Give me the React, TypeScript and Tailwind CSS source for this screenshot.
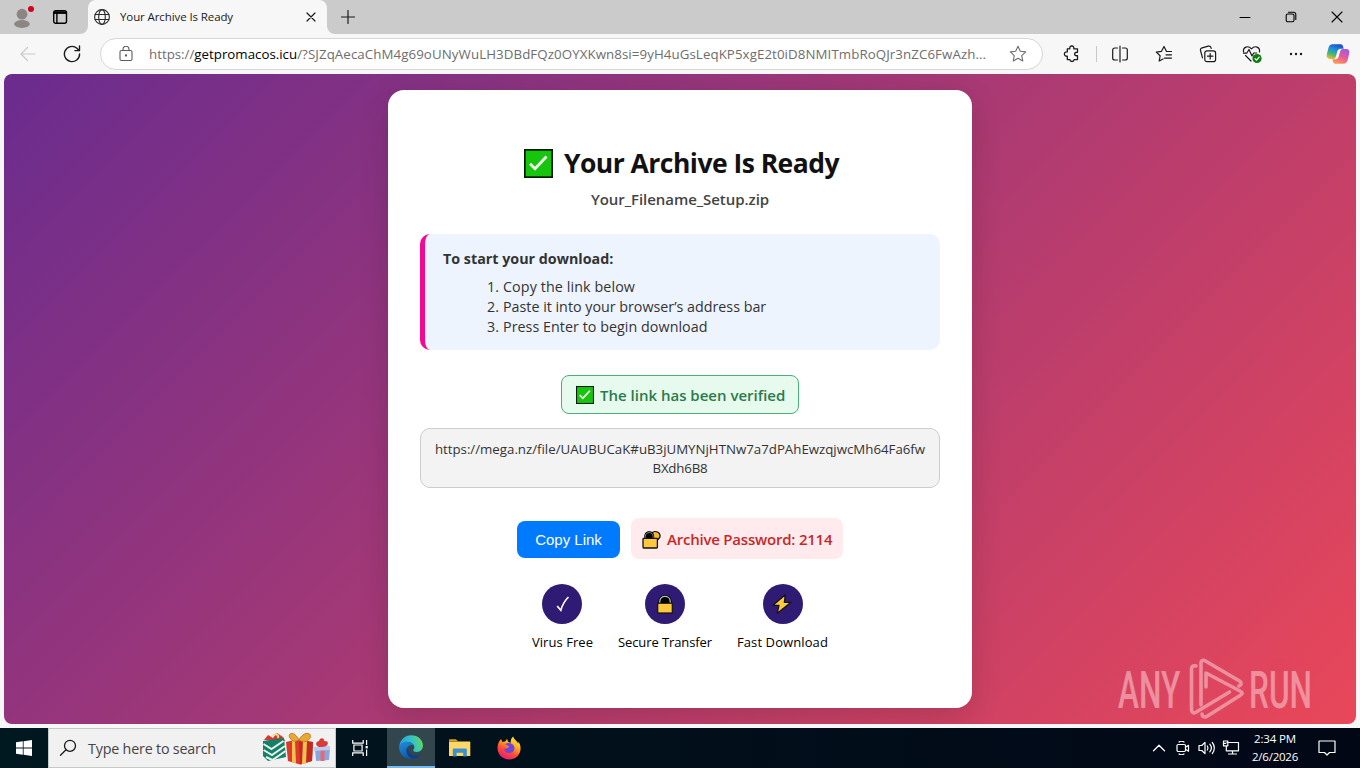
import type { ReactNode } from "react";

const STEPS = [
  { text: "Copy the link below", className: "tracking-[0.1px]" },
  { text: "Paste it into your browser’s address bar", className: "tracking-[-0.01px]" },
  { text: "Press Enter to begin download", className: "tracking-[0.04px]" },
];

function Line({ size = 18, className = "", width = 1.2, children }: { size?: number; className?: string; width?: number; children: ReactNode }) {
  return (
    <svg
      width={size}
      height={size}
      viewBox={`0 0 ${size} ${size}`}
      fill="none"
      stroke="currentColor"
      strokeWidth={width}
      strokeLinecap="round"
      strokeLinejoin="round"
      className={`shrink-0 ${className}`}
    >
      {children}
    </svg>
  );
}

function CheckBox({ size }: { size: number }) {
  return (
    <svg width={size} height={size} viewBox="0 0 29 29" className="shrink-0">
      <rect x="0.8" y="0.8" width="27.4" height="27.4" fill="#16c60c" stroke="#0b1a0b" strokeWidth="1.8" />
      <path d="M6 14.8l5 5L22.5 7.5" fill="none" stroke="#f3f9ef" strokeWidth="2.8" />
    </svg>
  );
}

function TabStrip() {
  return (
    <div className="flex h-[34px] items-start bg-[#cbcbcb]">
      <div className="flex h-[34px] w-[88px] items-center">
        <svg width="24" height="26" viewBox="0 0 24 26" className="ml-3">
          <circle cx="10" cy="10.2" r="5.4" fill="#8b8683" />
          <ellipse cx="10" cy="20" rx="7.8" ry="3.9" fill="#8b8683" />
          <circle cx="19" cy="5" r="4" fill="#cbcbcb" />
          <circle cx="19" cy="5" r="3" fill="#d0021b" />
        </svg>
        <Line size={16} className="ml-4 text-black" width={1.4}>
          <rect x="1.7" y="1.7" width="12.8" height="12.6" rx="2" />
          <path d="M2 3.6h12.4" strokeWidth="2.6" strokeLinecap="butt" />
          <path d="M4.9 4v10" />
        </Line>
      </div>
      <div className="relative flex h-[34px] w-[239px] items-center rounded-t-lg bg-[#f7f7f7]">
        <svg width="8" height="8" className="absolute bottom-0 -left-2">
          <path d="M8 0v8H0A8 8 0 0 0 8 0z" fill="#f7f7f7" />
        </svg>
        <svg width="8" height="8" className="absolute -right-2 bottom-0">
          <path d="M0 0v8h8A8 8 0 0 1 0 0z" fill="#f7f7f7" />
        </svg>
        <Line size={16} className="ml-1.5 text-[#2b2b2b]" width={1.1}>
          <circle cx="8" cy="8" r="7.4" />
          <ellipse cx="8" cy="8" rx="3.3" ry="7.4" />
          <path d="M1.1 5.5h13.8M1.1 10.5h13.8" />
        </Line>
        <span className="ml-2.5 text-[11.5px] tracking-[-0.1px] text-[#1b1b1b]">Your Archive Is Ready</span>
        <Line size={10} className="absolute top-3 left-[218px] text-[#1b1b1b]">
          <path d="M1 1l8 8M9 1L1 9" />
        </Line>
      </div>
      <Line size={14} className="mt-2.5 ml-3.5 text-[#1b1b1b]">
        <path d="M7 .5v13M.5 7h13" />
      </Line>
      <div className="ml-auto flex h-[34px] items-center text-black">
        <div className="flex w-[46px] justify-center">
          <Line size={12} width={1}>
            <path d="M1 6.5h10" />
          </Line>
        </div>
        <div className="flex w-[46px] justify-center">
          <Line size={12} width={1.1}>
            <rect x="1.2" y="3" width="7.8" height="7.8" rx="1.6" />
            <path d="M3.4 1.2H8.6a2.2 2.2 0 0 1 2.2 2.2v5" />
          </Line>
        </div>
        <div className="flex w-[46px] justify-center">
          <Line size={12} width={1.1}>
            <path d="M1 1l10 10M11 1L1 11" />
          </Line>
        </div>
      </div>
    </div>
  );
}

function ToolButton({ children }: { children: ReactNode }) {
  return <div className="flex h-8 w-11 shrink-0 items-center justify-center text-[#1b1b1b]">{children}</div>;
}

function CopilotIcon() {
  return (
    <svg width="24" height="22" viewBox="0 0 24 22">
      <defs>
        <linearGradient id="cpA" x1="0.6" y1="0" x2="0.2" y2="1">
          <stop offset="0" stopColor="#1b4fc4" />
          <stop offset="0.35" stopColor="#1f8fe0" />
          <stop offset="0.65" stopColor="#3fb57d" />
          <stop offset="1" stopColor="#f2c01c" />
        </linearGradient>
        <linearGradient id="cpB" x1="0.8" y1="0" x2="0.3" y2="1">
          <stop offset="0" stopColor="#9a5ce8" />
          <stop offset="0.5" stopColor="#e8589c" />
          <stop offset="1" stopColor="#ff9a50" />
        </linearGradient>
      </defs>
      <path
        d="M6.5 1.2h8.2c1.200 0 2 .8 2.300 2l.7 2.600h-3.200c-1.700 0-2.600.9-3.100 2.500l-1.700 5.600c-.4 1.300-1.200 2-2.600 2H3.600c-2.300 0-3.500-2-2.800-4.700l1.600-6.200C3.100 2.500 4.300 1.200 6.500 1.200z"
        fill="url(#cpA)"
      />
      <path
        d="M17.500 20.800H9.300c-1.200 0-2-.8-2.300-2l-.7-2.600h3.200c1.700 0 2.600-.9 3.100-2.500l1.700-5.600c.4-1.300 1.200-2 2.600-2h3.500c2.300 0 3.500 2 2.800 4.700l-1.600 6.200c-.7 2.500-1.900 3.800-4.100 3.800z"
        fill="url(#cpB)"
      />
    </svg>
  );
}

function Toolbar() {
  return (
    <div className="flex h-10 items-center bg-[#f7f7f7]">
      <Line size={16} className="ml-5 text-[#c9c9c9]">
        <path d="M15 8H1M7.500 1.500L1 8l6.500 6.500" />
      </Line>
      <Line size={18} className="ml-[27px] text-[#1b1b1b]" width={1.4}>
        <path d="M16.600 9a7.600 7.600 0 1 1-2.700-5.800l2.300 2.200" />
        <path d="M16.500 1v4.600h-4.600" />
      </Line>
      <div className="ml-[19px] flex h-8 w-[943px] items-center rounded-full border border-[#d6d6d6] bg-white">
        <Line size={16} className="ml-[17px] text-[#5c5c5c]" width={1.1}>
          <rect x="2" y="4.500" width="12" height="10" rx="1.500" />
          <path d="M5 4.500V3.300a3 3 0 0 1 6 0v1.200" />
          <circle cx="8" cy="9.500" r="0.600" fill="currentColor" />
        </Line>
        <span className="mt-0.5 ml-[15px] text-[13.3px] whitespace-nowrap text-[#6e6e6e]">
          https://<span className="text-black">getpromacos.icu</span>
          <span className="tracking-[0.08px]">/?SJZqAecaChM4g69oUNyWuLH3DBdFQz0OYXKwn8si=9yH4uGsLeqKP5xgE2t0iD8NMITmbRoQJr3nZC6FwAzh...</span>
        </span>
        <Line size={18} className="mr-[15px] ml-auto text-[#6e6e6e]" width={1.1}>
          <path d="M9 1.300l2.300 5 5.400.6-4 3.700 1.100 5.400L9 13.300 4.200 16l1.100-5.400-4-3.700 5.400-.6z" />
        </Line>
      </div>
      <div className="ml-[7px] flex items-center">
        <ToolButton>
          <Line size={18} width={1.3}>
            <path d="M4.300 3.800h2.500c-.3-1.900.6-2.800 2-2.800s2.300.9 2 2.800h3.700v3.500c-1.900-.2-2.900.5-2.900 1.700s1 2 2.900 1.700v3.900h-3.400c-.1 1.200-.9 1.900-2.100 1.900s-2-.7-2.100-1.900H4.300v-3.400C2.500 11.400 1.400 10.500 1.400 9s1.100-2.300 2.900-2.100z" />
          </Line>
        </ToolButton>
        <div className="mr-px ml-0.5 h-4 w-px bg-[#c8c8c8]" />
        <ToolButton>
          <Line size={18} width={1.2}>
            <path d="M6.500 3H3.700a2 2 0 0 0-2 2v8a2 2 0 0 0 2 2h2.800M11.500 3h2.800a2 2 0 0 1 2 2v8a2 2 0 0 1-2 2h-2.800M9 1v16" />
          </Line>
        </ToolButton>
        <ToolButton>
          <Line size={18} width={1.2}>
            <path d="M16.500 6.500h-5L9 1.500 6.500 6.300 1.300 7.100l3.800 3.700-.9 5.200 3.900-2M11 9.800h5.500M9.500 13.100h7" />
          </Line>
        </ToolButton>
        <ToolButton>
          <Line size={18} width={1.2}>
            <rect x="5.800" y="5.800" width="10.800" height="10.800" rx="2.200" />
            <path d="M11.200 8.500v5.400M8.500 11.200h5.400M3.500 12.800L1.500 5.500a2.200 2.200 0 0 1 1.600-2.700l6.200-1.600A2.200 2.200 0 0 1 12 2.700l.2.800" />
          </Line>
        </ToolButton>
        <ToolButton>
          <Line size={20} width={1.2}>
            <path d="M9 17L3.500 11.500M1.500 8C.8 3 6 1 9.500 4.800 13 1 18.200 3 17.500 8" />
            <path d="M1.500 9.200h3.200L7 5.500l3 6.500 1.700-3h3" />
            <circle cx="15" cy="14.500" r="4.600" fill="#107c10" stroke="none" />
            <path d="M13 14.600l1.500 1.500 2.700-2.900" stroke="#fff" />
          </Line>
        </ToolButton>
        <ToolButton>
          <svg width="14" height="4" viewBox="0 0 14 4" fill="currentColor">
            <circle cx="2" cy="2" r="1.200" />
            <circle cx="7" cy="2" r="1.200" />
            <circle cx="12" cy="2" r="1.200" />
          </svg>
        </ToolButton>
        <div className="flex w-10 justify-center">
          <CopilotIcon />
        </div>
      </div>
    </div>
  );
}

function Feature({ label, className, children }: { label: string; className: string; children: ReactNode }) {
  return (
    <div className="flex flex-col items-center">
      <div className="flex size-10 items-center justify-center rounded-full bg-[#2f1a74]">{children}</div>
      <span className={`mt-2 text-[13px] leading-5 whitespace-nowrap text-black ${className}`}>{label}</span>
    </div>
  );
}

function ArchiveCard() {
  return (
    <div className="flex h-[618px] w-[584px] flex-col items-center rounded-2xl bg-white px-8 pt-[54px] shadow-[0_8px_30px_rgba(0,0,0,0.15)]">
      <h1 className="ml-[3px] flex h-[38px] items-center text-[26.5px] leading-[38px] font-bold whitespace-nowrap text-[#111]">
        <CheckBox size={29} />
        <span className="ml-[11px] tracking-[-0.53px]">Your Archive Is Ready</span>
      </h1>
      <p className="mt-[5px] text-[15px] leading-6 font-semibold tracking-[-0.06px] text-[#444]">Your_Filename_Setup.zip</p>

      <div className="mt-[23px] h-[116px] w-full rounded-[10px] border-l-[5px] border-[#f20a94] bg-[#eef4fe] pt-[15px] pl-[18px] text-[14.3px] leading-5 text-[#333]">
        <p className="font-bold">To start your download:</p>
        <ol className="mt-2">
          {STEPS.map((step, i) => (
            <li key={step.text} className="flex">
              <span className="w-[60px] pr-1 text-right">{i + 1}.</span>
              <span className={step.className}>{step.text}</span>
            </li>
          ))}
        </ol>
      </div>

      <div className="mt-[25px] flex h-[39px] w-[238px] items-center rounded-lg border border-[#4caf7a] bg-[#e6fbee] pt-px pl-3.5 text-[15px] font-semibold whitespace-nowrap text-[#2a7a4b]">
        <CheckBox size={18} />
        <span className="ml-1.5 pt-px">The link has been verified</span>
      </div>

      <div className="mt-3.5 h-[60px] w-full rounded-[10px] border border-[#ccc] bg-[#f3f3f3] px-2 pt-[11px] text-center text-[13.3px] leading-[19px] text-[#333]">
        <p className="tracking-[-0.02px]">https://mega.nz/file/UAUBUCaK#uB3jUMYNjHTNw7a7dPAhEwzqjwcMh64Fa6fw</p>
        <p className="tracking-[-0.19px]">BXdh6B8</p>
      </div>

      <div className="mt-[30px] flex items-end gap-[11px]">
        <button className="mb-px h-[37px] w-[103px] rounded-lg bg-[#007bff] pt-px font-['Liberation_Sans'] text-[15px] text-white">Copy Link</button>
        <div className="flex h-[41px] w-[212px] items-center rounded-lg bg-[#ffebee] pt-0.5 pl-[11px] text-[15px] font-semibold whitespace-nowrap text-[#c62828]">
          <svg width="19" height="19" viewBox="0 0 19 19" className="shrink-0">
            <path
              d="M9.500 3.500C11 1.300 14 1.200 16 2.300c2.600 1.500 2.700 4.800.6 6.500l-1.300 1.400H9.500z"
              fill="#f5b82e"
              stroke="#111"
              strokeWidth="1.300"
              strokeLinejoin="round"
            />
            <path d="M2.200 9.500V6.500c0-7 10-7 10 0v3z" fill="#000" />
            <path d="M3.300 8.500V6.500c0-5.200 7.800-5.200 7.800 0v2" fill="none" stroke="#8d989c" strokeWidth="0.900" />
            <rect x="1" y="8.400" width="14.400" height="9.600" rx="0.800" fill="#ffc83d" stroke="#111" strokeWidth="1.300" />
          </svg>
          <span className="ml-1.5 tracking-[-0.22px]">Archive Password: 2114</span>
        </div>
      </div>

      <div className="mt-[25px] flex justify-center gap-[25px]">
        <Feature label="Virus Free" className="tracking-[0.05px]">
          <svg width="16" height="18" viewBox="0 0 16 18" fill="none" stroke="#fff" strokeWidth="1.700" className="ml-0.5">
            <path d="M2.200 11l3.600 4.200C7.500 9.500 9.800 5.500 13.500 2" />
          </svg>
        </Feature>
        <Feature label="Secure Transfer" className="tracking-[-0.1px]">
          <svg width="18" height="20" viewBox="0 0 18 20">
            <path d="M2.500 11V7.300C2.500-1 15.500-1 15.500 7.300V11z" fill="#000" />
            <path d="M3.800 10.500V7.300c0-6.600 10.400-6.600 10.400 0v3.200" fill="none" stroke="#b9c3c7" strokeWidth="1.200" />
            <rect x="1.700" y="9.200" width="14.600" height="9.800" fill="#ffc83d" stroke="#111" strokeWidth="1.200" />
          </svg>
        </Feature>
        <Feature label="Fast Download" className="tracking-[0.1px]">
          <svg width="20" height="20" viewBox="0 0 20 20" className="mr-px">
            <path d="M13.300.8L1 11.300h6L5.300 19.200 19 8.300h-6.700z" fill="#ffc83d" stroke="#111" strokeWidth="1.200" strokeLinejoin="round" />
          </svg>
        </Feature>
      </div>
    </div>
  );
}

function Watermark() {
  return (
    <svg width="200" height="70" viewBox="1115 654 200 70" className="absolute right-[41px] bottom-0 overflow-visible font-['Roboto'] opacity-50">
      <g fill="#ffd9dd" fontSize="51" fontWeight="500">
        <text transform="translate(1118 708) scale(.62 1)">ANY</text>
        <text transform="translate(1249 708) scale(.62 1)">RUN</text>
      </g>
      <g fill="none" stroke="#ffd9dd" strokeWidth="3.600" strokeLinejoin="round" strokeLinecap="round">
        <path d="M1196 666c-3-1-4.500.5-4.500 3v41c0 2.500 2 3.500 4 2.500l34-20.500" />
        <path d="M1206 687v-14l34 18c3 1.500 3 3 0 4.500l-32.500 20.500c-3 2-5.500.5-5.500-2" />
        <path d="M1239 686c2.500-1 3-3.500.5-5l-34-20c-2.500-1.500-4.500-.5-4.500 2v42" />
      </g>
    </svg>
  );
}

function Gifts() {
  return (
    <svg width="70" height="36" viewBox="0 0 70 36" className="mr-[3px] ml-auto">
      <path d="M2 10l4-5 5 3 4-5 6 4 2 4z" fill="#d8382c" />
      <path d="M11 6c1-3 6-2 5 2" fill="none" stroke="#f2dc9a" strokeWidth="2" />
      <path d="M1 11l21-3 2 19-18 4-5-5z" fill="#14806a" />
      <path d="M1.500 14l8 5 12-8M1.600 20l8.400 5 13-9M4 27l6.500 3 13-9" fill="none" stroke="#e8f2e8" strokeWidth="2" />
      <path d="M24 12l13-3 14 3-1 19-12 3.500-12-3.500z" fill="#d93a2b" />
      <path d="M37 11l14 1-1 19-12 3.500z" fill="#c22a20" />
      <path d="M30 11l3-.8 1 23-4-1zM41 11l4 .3-1 22-4 1z" fill="#f4c14e" />
      <path d="M37 10C32 0 25 3 28 8s6 3 9 2zM37 10c5-10 14-7 11-2s-7 4-11 2z" fill="#e6a838" stroke="#c67f23" strokeWidth="1" />
      <path d="M53 19l15-1-1 12-13 1z" fill="#89a7dc" />
      <path d="M58.500 19h4v12h-4z" fill="#e46878" />
      <path d="M52 17l16-1v4l-16 1z" fill="#b8cdf0" />
      <path d="M60 17c-6 1-8-5-3-6 1-4 6-3 5 0 6-1 5 6-2 6z" fill="#d93a3a" />
    </svg>
  );
}

function Taskbar() {
  return (
    <div className="flex h-10 items-stretch bg-gradient-to-r from-[#001820] to-[#020716] text-white">
      <div className="flex w-12 items-center justify-center">
        <svg width="16" height="16" viewBox="0 0 16 16" fill="#fff">
          <path d="M0 2.300L6.800 1.300v6.300H0zM7.600 1.200L16 0v7.600H7.600zM0 8.400h6.800v6.300L0 13.700zM7.600 8.400H16V16l-8.400-1.200z" />
        </svg>
      </div>
      <div className="flex w-72 items-center border border-[#c4c8c9] bg-[#f1f1f1] text-[#3a3a3a]">
        <Line size={18} className="ml-2.5 text-[#1b1b1b]" width={1.3}>
          <circle cx="11" cy="6.800" r="5.500" />
          <path d="M7 10.800L1.500 16.300" />
        </Line>
        <span className="mt-0.5 ml-[11px] text-[14.3px] tracking-[-0.19px] text-[#454545]">Type here to search</span>
        <Gifts />
      </div>
      <div className="flex w-[51px] items-center pl-4">
        <svg width="17" height="16" viewBox="0 0 17 16" fill="none" stroke="#fff" strokeWidth="1.200">
          <path d="M.7 0v3.200h10.500V0M.7 16v-3.200h10.500V16M1.900 5h8.200v6H1.900zM14.600 0v5M14.600 9.500V16" />
          <rect x="13.600" y="6" width="2.200" height="2.400" fill="#fff" stroke="none" />
        </svg>
      </div>
      <div className="flex w-12 items-center justify-center border-b-2 border-[#76b9ed] bg-[#33464e]">
        <svg width="24" height="24" viewBox="0 0 24 24">
          <defs>
            <linearGradient id="edA" x1="0" y1="0.500" x2="1" y2="0.300">
              <stop offset="0" stopColor="#2a9fe0" />
              <stop offset="0.550" stopColor="#35c2c7" />
              <stop offset="1" stopColor="#62d85c" />
            </linearGradient>
            <linearGradient id="edB" x1="0" y1="0" x2="0.600" y2="1">
              <stop offset="0" stopColor="#1f8fdd" />
              <stop offset="1" stopColor="#0f4f9e" />
            </linearGradient>
          </defs>
          <path d="M.3 11.500C1 4.500 6 .2 12.300.2 19 .2 24 5 24 10.600c0 4-3 6.400-6.200 6.400-2.500 0-4-.8-3.500-2 .5-.8 1-1.500 1-2.800 0-2.900-2.700-5-6.500-5-4 0-7.300 1.800-8.500 4.300z" fill="url(#edA)" />
          <path d="M.2 12C.5 8.800 3.800 6.800 7.500 6.800c4.300 0 7 2 7.800 4.500-1.500-2-5-2-6.500.8-1.700 4.300 1.700 9.900 8 9.200 1.700-.2 3-.8 4.700-1.700C19.500 22.500 16 24 12 24 5.200 24-.3 18.500.2 12z" fill="url(#edB)" />
          <path d="M8.800 12.100C6 15 7.500 22 14 23.800c3-.4 6-2 7.800-4.300-6 3.300-13.500.5-13-7.400z" fill="#0d3f87" />
        </svg>
      </div>
      <div className="flex w-[49px] items-center justify-center">
        <svg width="22" height="18" viewBox="0 0 22 18">
          <path d="M0 1.500C0 .6.500.3 1 .3h6l2 2H0z" fill="#e39b1c" />
          <path d="M0 2.500h20.300c.6 0 1 .4 1 1V17H0z" fill="#ffd766" />
          <path d="M3.800 17.500V10.500c0-.6.400-1 1-1h12c.6 0 1 .4 1 1v7h-3.600v-3.800H7.600v3.800z" fill="#3a8fd0" />
        </svg>
      </div>
      <div className="flex w-[49px] items-center justify-center">
        <svg width="24" height="24" viewBox="0 0 24 24">
          <defs>
            <linearGradient id="fx" x1="0.800" y1="0" x2="0.250" y2="1">
              <stop offset="0" stopColor="#fff04a" />
              <stop offset="0.350" stopColor="#ffac24" />
              <stop offset="0.650" stopColor="#ff4b36" />
              <stop offset="1" stopColor="#e2187c" />
            </linearGradient>
          </defs>
          <path d="M2.500 5L4 3l1.500 3 3-.7L10 2.800l1.200 3L13.500 7c.1-3 1-5.200 2.600-6.500.8 3.200 3.700 4 5 7 .2-.7.200-1.300 0-2 2 2.200 2.700 5 2.400 8-.5 6-5.500 10-11.300 10C5.500 23.500.5 18.500.5 12.300.5 9.500 1.200 7 2.500 5z" fill="url(#fx)" />
          <path d="M8 8.500c2.500-2.500 7-1.800 8.800 1.300 1.800 3.400-.3 7.200-4.500 7.200-3.400 0-5.400-2.300-4.800-4.700 1 .5 2 .4 3-.2l1.600-1.200c-.5-1.200-2.600-2-4.100-2.400z" fill="#6f45dd" />
        </svg>
      </div>
      <div className="ml-auto flex items-center">
        <Line size={14} className="mr-[10px]" width={1.300}>
          <path d="M1.500 9.800L7 4.300l5.500 5.500" />
        </Line>
        <Line size={14} className="mr-2" width={1.200}>
          <rect x="1" y="3.500" width="8.500" height="7" rx="1.200" />
          <path d="M9.500 6.200L12.500 4.300v5.900L9.500 8.300M3 1c1.700-1 3.500-1 5 0M3 13c1.700 1 3.500 1 5 0" />
        </Line>
        <Line size={18} className="mr-1.5" width={1.200}>
          <path d="M1 6.500h2.800L7 3.300v11.400L3.800 11.500H1zM9.300 7c.9 1.200.9 2.800 0 4M11.800 5.200c1.900 2.200 1.900 5.400 0 7.600M14.300 3.500c2.700 3.200 2.700 7.800 0 11" />
        </Line>
        <Line size={18} className="mr-[11px]" width={1.200}>
          <path d="M5 3.500h11.500v8.300H4.300V7.500M10.500 12v3M6.500 15h8M1.500 2h4.300v4.800H1.500zM1.500 4.300h2.300" />
        </Line>
        <div className="-mt-px w-12 text-center text-[11.5px] leading-[18px]">
          <p className="tracking-[-0.14px]">2:34 PM</p>
          <p className="tracking-[-0.23px]">2/6/2026</p>
        </div>
        <Line size={18} className="mr-6 ml-[19px]" width={1.200}>
          <path d="M1 2h16v11.500h-5.500L9 16l-2.500-2.500H1z" />
        </Line>
      </div>
    </div>
  );
}

export default function App() {
  return (
    <div className="flex h-[768px] w-[1360px] flex-col overflow-hidden bg-[#f7f7f7] font-['Open_Sans',sans-serif]">
      <TabStrip />
      <Toolbar />
      <div className="relative mx-1 mb-1 flex h-[650px] justify-center overflow-hidden rounded-lg bg-[linear-gradient(135deg,#6a2c8e,#e94759)] pt-4">
        <ArchiveCard />
        <Watermark />
      </div>
      <Taskbar />
    </div>
  );
}
